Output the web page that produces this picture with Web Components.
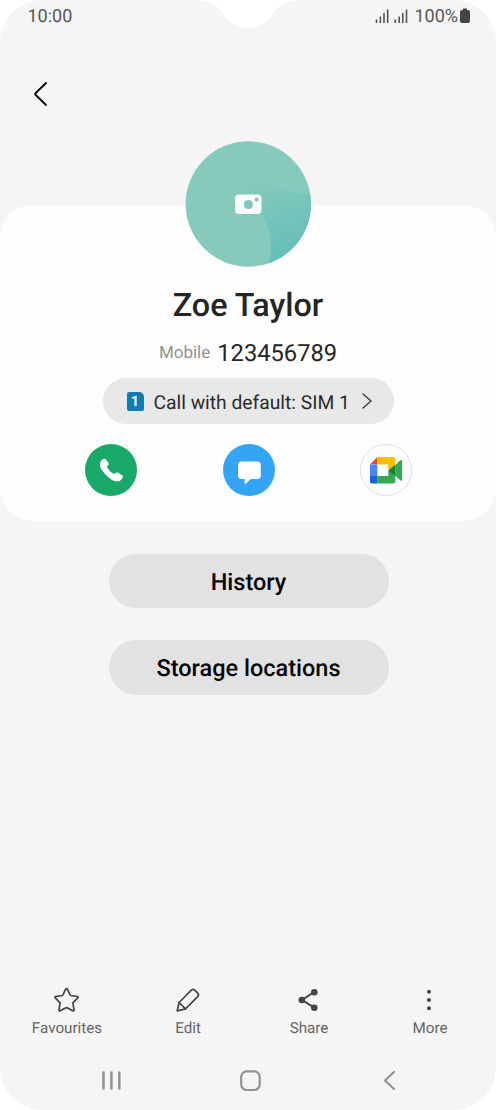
<!DOCTYPE html>
<html lang="en">
<head>
<meta charset="utf-8">
<title>Contact</title>
<style>
html,body{margin:0;background:#fff}
body{font-family:Roboto,"Liberation Sans",sans-serif;text-rendering:geometricPrecision}
</style>
</head>
<body>
<contact-screen></contact-screen>
<script>
const define = (name, html) => customElements.define(name, class extends HTMLElement {
  constructor() {
    super();
    const t = document.createElement('template');
    t.innerHTML = html;
    this.attachShadow({ mode: 'open' }).append(t.content.cloneNode(true));
  }
});

define('status-bar', `<style>
:host{display:flex;height:32px;box-sizing:border-box;padding:0 26px 0 27.500px;color:#555;font-size:18px;line-height:34px;justify-content:space-between;position:relative}
.right{display:flex;align-items:center;height:32px}
svg{display:block}
.notch{position:absolute;left:195px;top:0}
.time,.pct{height:32px}
.pct{margin-left:6px}
</style>
<svg class="notch" width="106" height="30"><path d="M0 0C14 0 22 5 29 15C35 24 43 28 53 28C63 28 71 24 77 15C84 5 92 0 106 0Z" fill="#fff"/></svg>
<span class="time">10:00</span>
<div class="right">
<svg width="38" height="32" stroke="#555" stroke-width="1.6"><path d="M6.500 23V19.500M10.400 23V16.500M14 23V13M17.700 23V9.500M25.300 23V19.500M29.200 23V16.500M32.800 23V13M36.500 23V9.500"/></svg>
<span class="pct">100%</span>
<svg width="10" height="32" style="margin-left:2px"><path d="M2 10H3V8.5H7V10H8Q10 10 10 12V21Q10 23 8 23H2Q0 23 0 21V12Q0 10 2 10Z" fill="#444"/></svg>
</div>`);

define('contact-avatar', `<style>:host{display:block;width:126px;height:126px}svg{display:block}</style>
<svg width="126" height="126" viewBox="0 0 126 126">
<defs><clipPath id="c"><circle cx="63.300" cy="63" r="62.700"/></clipPath>
<linearGradient id="g" gradientUnits="userSpaceOnUse" x1="72" y1="36" x2="100" y2="112"><stop offset="0" stop-color="#86cabb"/><stop offset="1" stop-color="#66bfba"/></linearGradient></defs>
<g clip-path="url(#c)"><rect width="126" height="126" fill="#86cabb"/>
<path d="M40 49Q60 32 79 38C91 47 107 53 126 53V126H82Q92 98 77 75Q65 53 40 49Z" fill="url(#g)"/></g>
<path d="M54 53.500H72.500Q76.500 53.500 76.500 57.500V69Q76.500 73 72.500 73H54Q50 73 50 69V57.500Q50 53.500 54 53.500Z" fill="#fdfdfd"/>
<circle cx="63.400" cy="63.500" r="4.600" fill="#80c8bb"/><circle cx="71.600" cy="58.600" r="2" fill="#7bc5bb"/>
</svg>`);

define('sim-pill', `<style>
:host{display:flex;width:291px;height:46px;border-radius:23px;background:#e8e8e8;box-sizing:border-box;padding:0 21px 0 24px;align-items:center;color:#2b2b2b;font-size:19.250px;line-height:46px;white-space:nowrap}
.sim{width:17px;height:19px;background:#0c7db1;border-radius:2px 5px 2px 2px;color:#fff;font-size:14.500px;line-height:20px;text-align:center;font-weight:700;margin-right:10px}
svg{margin-left:auto}
.t{padding-top:3px}
</style><span class="sim">1</span><span class="t"><slot></slot></span>
<svg width="12" height="18" fill="none" stroke="#444" stroke-width="1.600" stroke-linejoin="round" stroke-linecap="round"><path d="M2 2L10 9L2 16"/></svg>`);

define('action-row', `<style>
:host{display:flex;justify-content:space-between;width:326px}svg{display:block}svg:last-child{margin-right:-1px}svg:nth-of-type(2){margin-left:1px}</style>
<svg width="52" height="52"><circle cx="26" cy="26" r="26" fill="#18a867"/><path d="M17.500 15.500C19 14.200 20.300 14.500 21.400 16L23.300 18.800C24 20.200 23.500 21.200 22 22.300C22.800 25.500 26.200 29 29.300 30C30.500 28.500 31.500 28.100 33 28.800L36.500 30.800C38.200 31.800 38.200 33.200 37 34.700C35 37.600 31.700 38.200 28 36.400C23.500 34.300 17.500 28.200 15.500 23.300C14.200 20 15 17.300 17.500 15.500Z" fill="#fff"/></svg>
<svg width="52" height="52"><circle cx="26" cy="26" r="26" fill="#33a5f4"/><path d="M18.500 17.500H34.300Q37.800 17.500 37.800 21V31.800Q37.800 35 34.500 35H27.800L22.500 40Q21.700 40.500 21.700 39.500V35H18.500Q15 35 15 31.500V21Q15 17.500 18.500 17.500Z" fill="#fff"/></svg>
<svg width="52" height="52"><circle cx="26" cy="26" r="25.500" fill="#fefefe" stroke="#e1e1e4"/>
<path d="M10 20.500L17.300 13V20.500Z" fill="#e94435"/><path d="M10 20.500H17.300V32H10Z" fill="#4788f4"/><path d="M10 32H17.300V39.600H12Q10 39.600 10 37.600Z" fill="#1967d2"/><path d="M17.300 13H33.200Q35.300 13 35.300 15V23L28.300 26.500V20.500H17.300Z" fill="#fbbc04"/><path d="M17.300 32H28.300V26.500L35.300 27V37.600Q35.300 39.600 33.200 39.600H17.300Z" fill="#34a853"/><path d="M35.300 21L40 16.500Q42.100 15.200 42.100 17V35.500Q42.100 37.500 40.200 36.200L35.300 32Z" fill="#34a853"/><path d="M28.300 26.500L35.300 20.700V32.300Z" fill="#188038"/></svg>`);

define('contact-card', `<style>
:host{display:flex;flex-direction:column;align-items:center;width:496px;box-sizing:border-box;height:316px;margin-top:73px;background:#fdfdfd;border-radius:32px}
contact-avatar{margin-top:-64px;flex:none}
h1{margin:17px 0 0;font-size:32.300px;line-height:42px;height:42px;font-weight:500;color:#252525;white-space:nowrap}
.phone{display:flex;height:30px;line-height:30px;margin-top:12px;gap:7px;font-size:23.700px;color:#252525}
.phone small{font-size:17px;color:#929292}
sim-pill{margin-top:10px}
action-row{margin-top:20px}
</style>
<contact-avatar></contact-avatar><h1><slot name="name"></slot></h1>
<div class="phone"><small>Mobile</small><slot name="number"></slot></div>
<sim-pill>Call with default: SIM 1</sim-pill><action-row></action-row>`);

define('pill-button', `<style>
:host{display:block;width:280px;height:54.500px;border-radius:28px;background:#e2e2e2;text-align:center;font-size:23.500px;line-height:57px;font-weight:500;color:#050505;white-space:nowrap}
</style><slot></slot>`);

define('tab-item', `<style>
:host{display:flex;flex-direction:column;align-items:center;width:121px;font-size:15.200px;line-height:20px;color:#666}
::slotted(svg){display:block;margin-bottom:4px}
</style><slot name="icon"></slot><span><slot></slot></span>`);

define('contact-screen', `<style>
:host{display:flex;flex-direction:column;width:496px;height:1110px;background:#f5f5f5;border-radius:42px;overflow:hidden}
header{height:100px;box-sizing:border-box;padding:49px 0 0 32px}
svg{display:block}
.buttons{display:flex;flex-direction:column;align-items:center;gap:32px;margin-top:32.600px;padding-left:1px}
.tabs{display:flex;margin-top:auto;padding-left:6.500px}
.nav{display:flex;height:26px;margin:29px 0 17px;padding-left:98px;gap:113.500px}
.icon{fill:none;stroke:#444;stroke-width:1.700;stroke-linejoin:round;stroke-linecap:round}
</style>
<status-bar></status-bar>
<header><svg width="18" height="26" fill="none" stroke="#090909" stroke-width="1.900" stroke-linecap="round" stroke-linejoin="round"><path d="M14 2L3.500 12.300Q2.700 13 3.500 13.700L14 24"/></svg></header>
<contact-card><span slot="name">Zoe Taylor</span><span slot="number">123456789</span></contact-card>
<div class="buttons"><pill-button>History</pill-button><pill-button>Storage locations</pill-button></div>
<div class="tabs">
<tab-item><svg slot="icon" class="icon" width="28" height="28"><path d="M12.700 3.100Q13.500 2 14.300 3.100L17.400 9.500L24.500 10.500Q25.700 10.900 24.800 11.900L19.900 16.900L21 23.900Q21 25.200 19.800 24.800L13.500 21.500L7.200 24.800Q6 25.200 6 23.900L7.100 16.900L2.200 11.900Q1.300 10.900 2.500 10.500L9.600 9.500Z"/></svg>Favourites</tab-item>
<tab-item><svg slot="icon" class="icon" width="28" height="28"><path d="M3.200 24.800L5.100 16.500L17.300 4.200Q19 2.600 20.700 4.200L23.700 7.200Q25.300 9 23.700 10.700L11.500 22.800Z"/><path d="M5.100 16.500L11.500 22.800"/></svg>Edit</tab-item>
<tab-item><svg slot="icon" width="28" height="28" fill="#444"><path d="M19.300 6L7 14L19.300 21.700" fill="none" stroke="#444" stroke-width="2"/><circle cx="19.300" cy="6.200" r="3.300"/><circle cx="6.800" cy="14" r="3.300"/><circle cx="19.300" cy="21.700" r="3.300"/></svg>Share</tab-item>
<tab-item><svg slot="icon" width="28" height="28" fill="#444"><circle cx="13" cy="5.700" r="2"/><circle cx="13" cy="14" r="2"/><circle cx="13" cy="22.200" r="2"/></svg>More</tab-item>
</div>
<div class="nav">
<svg width="26" height="26" fill="none" stroke="#929292" stroke-width="2.500" stroke-linecap="round"><path d="M5.500 5.500V21.500M13.400 5.500V21.500M21.300 5.500V21.500"/></svg>
<svg width="26" height="26" fill="none" stroke="#929292" stroke-width="2.200"><rect x="3.200" y="4.300" width="18.500" height="18.700" rx="5.500"/></svg>
<svg width="26" height="26" fill="none" stroke="#929292" stroke-width="2.200" stroke-linecap="round" stroke-linejoin="round"><path d="M17 5L8 13.500L17 22"/></svg>
</div>`);
</script>
</body>
</html>
